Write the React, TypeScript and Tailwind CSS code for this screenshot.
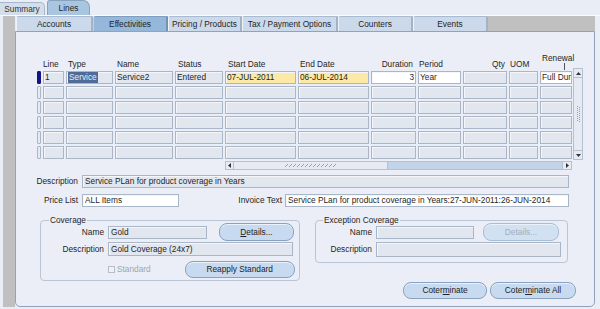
import React from "react";

const font = "font-['Liberation_Sans',Arial,sans-serif]";

const cols = [
  "w-[4px]",
  "w-[21px]",
  "w-[47px]",
  "w-[58px]",
  "w-[48px]",
  "w-[71px]",
  "w-[71px]",
  "w-[45px]",
  "w-[43px]",
  "w-[44px]",
  "w-[29px]",
  "w-[32px]",
];

type Kind = "gray" | "white" | "yellow";
const bgs: Record<Kind, string> = {
  gray: "bg-[#e2e7ef]",
  white: "bg-white",
  yellow: "bg-[#fce9a6]",
};

type CellDef = { text?: React.ReactNode; kind: Kind; right?: boolean };

const row1: CellDef[] = [
  { text: "1", kind: "gray" },
  {
    text: <span className="bg-[#4f6b97] text-[#e8edf5] px-[1px] py-[1px]">Service</span>,
    kind: "gray",
  },
  { text: "Service2", kind: "gray" },
  { text: "Entered", kind: "gray" },
  { text: "07-JUL-2011", kind: "yellow" },
  { text: "06-JUL-2014", kind: "yellow" },
  { text: "3", kind: "white", right: true },
  { text: "Year", kind: "white" },
  { kind: "gray" },
  { kind: "gray" },
  { text: "Full Dura", kind: "white" },
];

const emptyRow: CellDef[] = Array.from({ length: 11 }, () => ({ kind: "gray" as Kind }));

function Cell({ def, w }: { def: CellDef; w: string }) {
  return (
    <div
      className={`${w} ${bgs[def.kind]} h-[13px] border border-[#a9b6c8] shadow-[inset_1px_1px_0_#f4f6fa] flex items-center overflow-hidden whitespace-nowrap px-[1px] ${
        def.right ? "justify-end" : ""
      }`}
    >
      {def.text}
    </div>
  );
}

function Row({ cells, current }: { cells: CellDef[]; current?: boolean }) {
  return (
    <div className="flex gap-[2px]">
      <div
        className={`w-[4px] h-[13px] rounded-[1px] border ${
          current ? "bg-[#14148a] border-[#14148a]" : "bg-[#e6ebf2] border-[#a9b6c8]"
        }`}
      />
      {cells.map((c, i) => (
        <Cell key={i} def={c} w={cols[i + 1]} />
      ))}
    </div>
  );
}

function Grip({ vertical }: { vertical?: boolean }) {
  const dots: React.ReactNode[] = [];
  if (vertical) {
    for (let i = 0; i < 8; i++) {
      dots.push(<rect key={"a" + i} x={1} y={i * 2} width={1} height={1} fill="#8fa0b6" />);
      dots.push(<rect key={"b" + i} x={3} y={i * 2 + 1} width={1} height={1} fill="#8fa0b6" />);
    }
    return (
      <svg width="5" height="16" viewBox="0 0 5 16">
        {dots}
      </svg>
    );
  }
  for (let i = 0; i < 13; i++) {
    dots.push(<rect key={"a" + i} x={i * 4} y={3} width={1} height={1} fill="#8fa0b6" />);
    dots.push(<rect key={"b" + i} x={i * 4 + 1} y={2} width={1} height={1} fill="#8fa0b6" />);
    dots.push(<rect key={"c" + i} x={i * 4 + 2} y={1} width={1} height={1} fill="#8fa0b6" />);
  }
  return (
    <svg width="52" height="5" viewBox="0 0 52 5">
      {dots}
    </svg>
  );
}

function Btn({
  w,
  children,
  disabled,
  h = "h-[18px]",
}: {
  w: string;
  children: React.ReactNode;
  disabled?: boolean;
  h?: string;
}) {
  return (
    <div
      className={`${w} ${h} rounded-[8px] border flex items-center justify-center ${
        disabled
          ? "border-[#a9bdd4] bg-[#d2e1f1] text-[#a0aebf]"
          : "border-[#8aa2bf] bg-[#c7daef] text-[#222]"
      } shadow-[inset_0_1px_0_#e9f1fa]`}
    >
      {children}
    </div>
  );
}

function Input({
  w,
  h = "h-[13px]",
  white,
  children,
}: {
  w: string;
  h?: string;
  white?: boolean;
  children?: React.ReactNode;
}) {
  return (
    <div
      className={`${w} ${h} border border-[#a9b6c8] ${
        white ? "bg-white" : "bg-[#e2e7ef]"
      } shadow-[inset_1px_1px_0_#f4f6fa] flex items-center px-[2px] whitespace-nowrap overflow-hidden`}
    >
      {children}
    </div>
  );
}

function InnerTab({ w, label, active }: { w: string; label: string; active?: boolean }) {
  return (
    <div
      className={`${w} h-[15px] flex items-center justify-center border-t border-l border-r-2 rounded-tl-[3px] ${
        active
          ? "bg-[#94b7da] border-t-[#7e9fc2] border-l-[#b9cfe6] border-r-[#7193b8]"
          : "bg-[#cbd9ea] border-t-[#a9bbd0] border-l-[#eef3f9] border-r-[#a2b3c7]"
      }`}
    >
      {label}
    </div>
  );
}

export default function App() {
  return (
    <div
      className={`${font} w-[600px] h-[309px] overflow-hidden bg-[#e9edf5] text-[8.3px] leading-none text-[#1f1f1f]`}
    >
      {/* outer tabs */}
      <div className="flex items-end h-[15px]">
        <div className="w-[45px] h-[13px] flex items-center justify-center bg-[#d3deea] border-t border-r border-[#a6b7cb] rounded-tr-[5px] text-[#333]">
          Summary
        </div>
        <div className="ml-[2px] w-[43px] h-[15px] flex items-center justify-center bg-[#a9c6e0] border-t border-l border-r border-[#88a3c1] rounded-tl-[3px] rounded-tr-[7px]">
          Lines
        </div>
      </div>

      <div className="flex h-[294px] border-t border-[#fbfcfe]">
        <div className="w-[3px]" />
        <div className="w-[12px] h-[291px] bg-[#c0c0c0]" />
        <div className="w-[580px] flex flex-col">
          {/* inner tabs */}
          <div className="flex h-[15px]">
            <div className="w-[1px]" />
            <InnerTab w="w-[77px]" label="Accounts" />
            <InnerTab w="w-[75px]" label="Effectivities" active />
            <InnerTab w="w-[74px]" label="Pricing / Products" />
            <InnerTab w="w-[96px]" label="Tax / Payment Options" />
            <InnerTab w="w-[75px]" label="Counters" />
            <InnerTab w="w-[75px]" label="Events" />
            <div className="flex-1 bg-[#c0c0c0]" />
          </div>

          {/* panel */}
          <div className="h-[276px] border border-[#8fa3bb] rounded-b-[5px] bg-[#ebeef6] pt-[21px] flex flex-col">
            {/* table */}
            <div className="flex items-start ml-[21px]">
              <div className="w-[535px] flex flex-col">
                {/* header */}
                <div className="flex gap-[2px] h-[18px]">
                  <div className={cols[0]} />
                  <div className={`${cols[1]} flex items-end pb-[3px]`}>Line</div>
                  <div className={`${cols[2]} flex items-end pb-[3px] pl-[2px]`}>Type</div>
                  <div className={`${cols[3]} flex items-end pb-[3px] pl-[2px]`}>Name</div>
                  <div className={`${cols[4]} flex items-end pb-[3px] pl-[3px]`}>Status</div>
                  <div className={`${cols[5]} flex items-end pb-[3px] pl-[3px] whitespace-nowrap`}>
                    Start Date
                  </div>
                  <div className={`${cols[6]} flex items-end pb-[3px] pl-[2px] whitespace-nowrap`}>
                    End Date
                  </div>
                  <div className={`${cols[7]} flex items-end justify-end pb-[3px] pr-[3px]`}>
                    Duration
                  </div>
                  <div className={`${cols[8]} flex items-end pb-[3px] pl-[1px]`}>Period</div>
                  <div className={`${cols[9]} flex items-end justify-end pb-[3px] pr-[2px]`}>Qty</div>
                  <div className={`${cols[10]} flex items-end pb-[3px] pl-[1px]`}>UOM</div>
                  <div className={`${cols[11]} flex flex-col items-start pl-[2px] pt-[1px]`}>
                    <span className="whitespace-nowrap">Renewal</span>
                    <div className="ml-[22px] mt-[1px] w-[1px] h-[7px] bg-[#555]" />
                  </div>
                </div>
                {/* rows */}
                <div className="flex flex-col gap-[2px]">
                  <Row cells={row1} current />
                  <Row cells={emptyRow} />
                  <Row cells={emptyRow} />
                  <Row cells={emptyRow} />
                  <Row cells={emptyRow} />
                  <Row cells={emptyRow} />
                </div>
                {/* horizontal scrollbar */}
                <div className="mt-[2px] ml-[188px] w-[347px] h-[9px] flex border border-[#b3c1d3] bg-[#c3d4e9]">
                  <div className="w-[8px] bg-[#e7ecf4] border-r border-[#b3c1d3] flex items-center justify-center">
                    <svg width="3" height="5" viewBox="0 0 3 5">
                      <path d="M3 0 L0 2.5 L3 5 Z" fill="#333" />
                    </svg>
                  </div>
                  <div className="w-[154px] bg-[#e5eaf3] border-r border-[#b3c1d3] flex items-center justify-center">
                    <Grip />
                  </div>
                  <div className="flex-1" />
                  <div className="w-[9px] bg-[#e7ecf4] border-l border-[#b3c1d3] flex items-center justify-center">
                    <svg width="3" height="5" viewBox="0 0 3 5">
                      <path d="M0 0 L3 2.5 L0 5 Z" fill="#333" />
                    </svg>
                  </div>
                </div>
              </div>
              {/* vertical scrollbar */}
              <div className="ml-[1px] mt-[15px] w-[10px] h-[92px] border border-[#b3c1d3] bg-[#e5eaf3] flex flex-col">
                <div className="h-[9px] border-b border-[#b3c1d3] flex items-center justify-center">
                  <svg width="5" height="3" viewBox="0 0 5 3">
                    <path d="M0 3 L2.5 0 L5 3 Z" fill="#333" />
                  </svg>
                </div>
                <div className="flex-1 flex items-center justify-center">
                  <Grip vertical />
                </div>
                <div className="h-[9px] border-t border-[#b3c1d3] flex items-center justify-center">
                  <svg width="5" height="3" viewBox="0 0 5 3">
                    <path d="M0 0 L2.5 3 L5 0 Z" fill="#333" />
                  </svg>
                </div>
              </div>
            </div>

            {/* description */}
            <div className="flex items-center mt-[5px]">
              <div className="w-[62px] text-right">Description</div>
              <div className="ml-[4px]">
                <Input w="w-[487px]">Service PLan for product coverage in Years</Input>
              </div>
            </div>

            {/* price list / invoice text */}
            <div className="flex items-center mt-[6px]">
              <div className="w-[62px] text-right">Price List</div>
              <div className="ml-[4px]">
                <Input w="w-[97px]" white>
                  ALL Items
                </Input>
              </div>
              <div className="w-[103px] text-right">Invoice Text</div>
              <div className="ml-[3px]">
                <Input w="w-[284px]" white>
                  Service PLan for product coverage in Years:27-JUN-2011:26-JUN-2014
                </Input>
              </div>
            </div>

            {/* groups */}
            <div className="flex items-start mt-[8px]">
              <fieldset className="ml-[24px] w-[260px] border border-[#bac6d6] rounded-[4px] pb-[2px]">
                <legend className="ml-[8px] px-[1px] h-[10px] leading-[10px]">Coverage</legend>
                <div className="flex items-center h-[18px] -mt-[2px]">
                  <div className="w-[63px] text-right">Name</div>
                  <div className="ml-[4px]">
                    <Input w="w-[99px]">Gold</Input>
                  </div>
                  <div className="ml-[12px]">
                    <Btn w="w-[75px]">
                      <span>
                        <span className="underline">D</span>etails...
                      </span>
                    </Btn>
                  </div>
                </div>
                <div className="flex items-center mt-[1px]">
                  <div className="w-[63px] text-right">Description</div>
                  <div className="ml-[4px]">
                    <Input w="w-[185px]" h="h-[14px]">
                      Gold Coverage (24x7)
                    </Input>
                  </div>
                </div>
                <div className="flex items-center mt-[5px] h-[17px]">
                  <div className="ml-[67px] w-[7px] h-[7px] border border-[#b4bfcd] bg-[#eef1f6]" />
                  <div className="ml-[2px] text-[#9aa6b5]">Standard</div>
                  <div className="ml-[34px]">
                    <Btn w="w-[110px]" h="h-[17px]">
                      Reapply Standard
                    </Btn>
                  </div>
                </div>
              </fieldset>

              <fieldset className="ml-[15px] w-[253px] border border-[#bac6d6] rounded-[4px] pb-[5px]">
                <legend className="ml-[7px] px-[1px] h-[10px] leading-[10px]">Exception Coverage</legend>
                <div className="flex items-center h-[18px] -mt-[2px]">
                  <div className="w-[56px] text-right">Name</div>
                  <div className="ml-[4px]">
                    <Input w="w-[98px]" />
                  </div>
                  <div className="ml-[9px]">
                    <Btn w="w-[76px]" disabled>
                      Details...
                    </Btn>
                  </div>
                </div>
                <div className="flex items-center mt-[1px]">
                  <div className="w-[56px] text-right">Description</div>
                  <div className="ml-[4px]">
                    <Input w="w-[185px]" h="h-[15px]" />
                  </div>
                </div>
              </fieldset>
            </div>

            {/* bottom buttons */}
            <div className="flex mt-[1px] ml-[387px] gap-[3px]">
              <Btn w="w-[84px]" h="h-[17px]">
                <span>
                  Coter<span className="underline">m</span>inate
                </span>
              </Btn>
              <Btn w="w-[86px]" h="h-[17px]">
                <span>
                  Coter<span className="underline">m</span>inate All
                </span>
              </Btn>
            </div>
          </div>
        </div>
      </div>
    </div>
  );
}
